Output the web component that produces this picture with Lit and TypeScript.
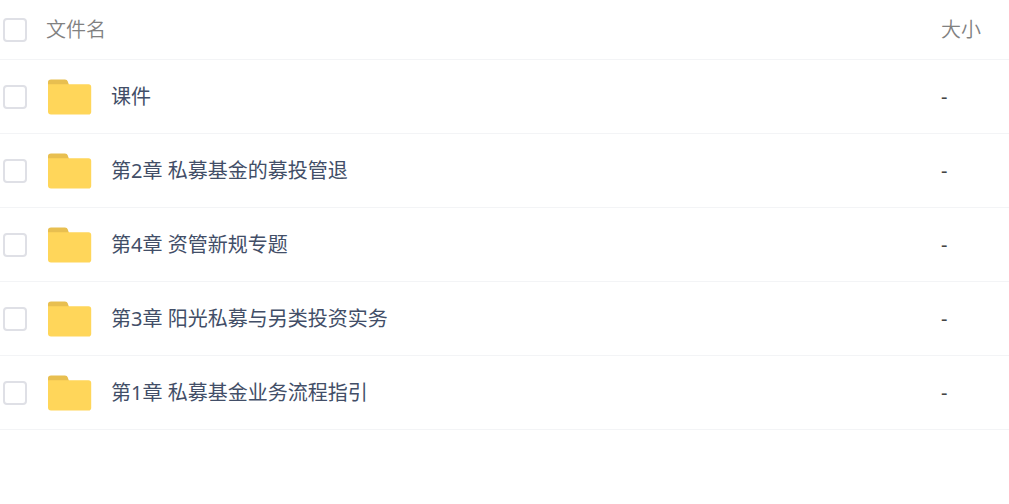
import { LitElement, html, css } from "lit";
import { customElement, property, state } from "lit/decorators.js";

interface FileEntry {
  name: string;
  size: string;
}

@customElement("folder-icon")
export class FolderIcon extends LitElement {
  static styles = css`
    :host {
      display: block;
      flex: none;
      width: 44px;
      height: 36px;
    }
    svg {
      display: block;
    }
  `;

  render() {
    return html`<svg width="44" height="36" viewBox="0 0 44 36" aria-hidden="true">
      <path d="M0 10V3Q0 0.5 3 0.5H17Q19.2 0.5 19.8 2.5L21 6V10Z" fill="#e8bf50" />
      <path d="M0 5.3H40.5Q43.2 5.3 43.2 8V32.7Q43.2 35.5 40.5 35.5H3Q0 35.5 0 32.5Z" fill="#ffd65a" />
    </svg>`;
  }
}

@customElement("app-root")
export class AppRoot extends LitElement {
  @property({ attribute: false }) files: FileEntry[] = [
    { name: "课件", size: "-" },
    { name: "第2章 私募基金的募投管退", size: "-" },
    { name: "第4章 资管新规专题", size: "-" },
    { name: "第3章 阳光私募与另类投资实务", size: "-" },
    { name: "第1章 私募基金业务流程指引", size: "-" },
  ];

  @state() private selected = new Set<number>();

  static styles = css`
    :host {
      display: block;
      min-height: 100vh;
      background: #fff;
      color: #424e67;
      font: 20px/28px "Noto Sans", "Noto Sans CJK SC", sans-serif;
    }
    table {
      width: 100%;
      table-layout: fixed;
      border-collapse: separate;
      border-spacing: 0;
    }
    th,
    td {
      box-sizing: border-box;
      padding: 0;
      border-bottom: 1px solid #f3f4f6;
      text-align: left;
      vertical-align: middle;
    }
    th {
      height: 60px;
      color: #818181;
      font-weight: 350;
    }
    td {
      height: 74px;
      padding-top: 1px;
      font-weight: 400;
    }
    .pick {
      width: 46px;
      padding-top: 0;
    }
    .size {
      width: 68px;
    }
    td.size {
      color: #444;
    }
    .box {
      appearance: none;
      display: block;
      box-sizing: border-box;
      width: 24px;
      height: 24px;
      margin: 0 0 0 3px;
      border: 2px solid #dfe0e6;
      border-radius: 4px;
      background: #fff;
    }
    .box:checked {
      border-color: #5b7cff;
      background: #5b7cff;
    }
    .entry {
      display: flex;
      align-items: center;
      gap: 19px;
      padding-left: 2px;
    }
    a {
      color: inherit;
      text-decoration: none;
    }
  `;

  private toggle(index: number) {
    const next = new Set(this.selected);
    if (!next.delete(index)) next.add(index);
    this.selected = next;
  }

  private toggleAll() {
    const all = this.selected.size === this.files.length;
    this.selected = new Set(all ? [] : this.files.keys());
  }

  render() {
    return html`
      <table>
        <thead>
          <tr>
            <th class="pick">
              <input
                class="box"
                type="checkbox"
                aria-label="全选"
                .checked=${this.selected.size === this.files.length}
                @change=${this.toggleAll}
              />
            </th>
            <th scope="col">文件名</th>
            <th class="size" scope="col">大小</th>
          </tr>
        </thead>
        <tbody>
          ${this.files.map(
            (file, i) => html`<tr>
              <td class="pick">
                <input
                  class="box"
                  type="checkbox"
                  aria-label=${file.name}
                  .checked=${this.selected.has(i)}
                  @change=${() => this.toggle(i)}
                />
              </td>
              <td>
                <div class="entry">
                  <folder-icon></folder-icon>
                  <a href="#">${file.name}</a>
                </div>
              </td>
              <td class="size">${file.size}</td>
            </tr>`
          )}
        </tbody>
      </table>
    `;
  }
}
